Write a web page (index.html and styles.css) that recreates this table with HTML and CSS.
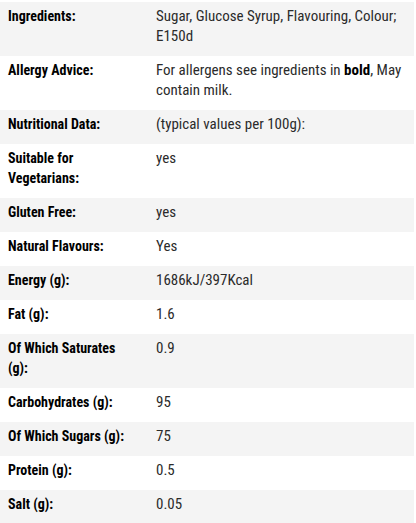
FILE: index.html
```html
<!DOCTYPE html>
<html lang="en">
<head>
  <meta charset="UTF-8">
  <title>Product Information</title>
  <link rel="stylesheet" href="styles.css">
</head>
<body>
  <table class="spec-table">
    <tbody>
      <tr><th>Ingredients:</th><td>Sugar, Glucose Syrup, Flavouring, Colour; E150d</td></tr>
      <tr><th>Allergy Advice:</th><td>For allergens see ingredients in <b>bold</b>, May contain milk.</td></tr>
      <tr><th>Nutritional Data:</th><td>(typical values per 100g):</td></tr>
      <tr><th>Suitable for Vegetarians:</th><td>yes</td></tr>
      <tr><th>Gluten Free:</th><td>yes</td></tr>
      <tr><th>Natural Flavours:</th><td>Yes</td></tr>
      <tr><th>Energy (g):</th><td>1686kJ/397Kcal</td></tr>
      <tr><th>Fat (g):</th><td>1.6</td></tr>
      <tr><th>Of Which Saturates (g):</th><td>0.9</td></tr>
      <tr><th>Carbohydrates (g):</th><td>95</td></tr>
      <tr><th>Of Which Sugars (g):</th><td>75</td></tr>
      <tr><th>Protein (g):</th><td>0.5</td></tr>
      <tr><th>Salt (g):</th><td>0.05</td></tr>
    </tbody>
  </table>
</body>
</html>
```

FILE: styles.css
```css
html, body {
  margin: 0;
  padding: 0;
  background: #fff;
}

body {
  padding-top: 2px;
  font-family: "Roboto Condensed", "Liberation Sans Narrow", "DejaVu Sans Condensed", sans-serif;
  font-size: 15px;
  line-height: 20px;
  color: #2b2b2b;
}

.spec-table {
  width: 414px;
  border-collapse: collapse;
}

.spec-table tr:nth-child(odd) {
  background: #f4f4f4;
}

.spec-table th,
.spec-table td {
  padding: 4px 8px 10px;
  text-align: left;
  vertical-align: top;
}

.spec-table th {
  width: 124px;
  padding-right: 16px;
  font-size: 14px;
  font-weight: bold;
  color: #000;
}

.spec-table td b {
  color: #000;
}
```
